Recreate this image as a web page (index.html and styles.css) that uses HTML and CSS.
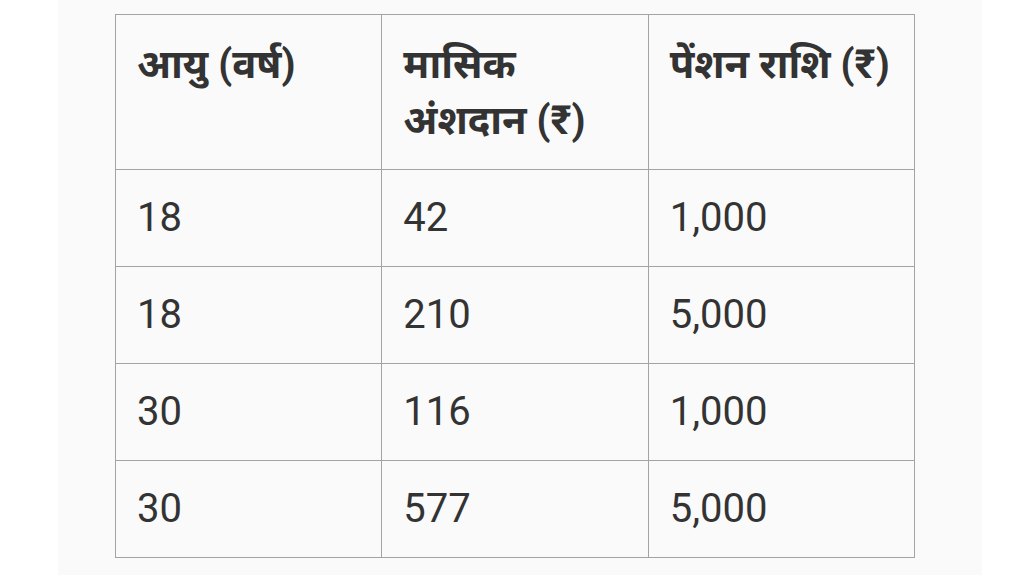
FILE: index.html
```html
<!DOCTYPE html>
<html lang="hi">
<head>
<meta charset="utf-8">
<link rel="stylesheet" href="styles.css">
</head>
<body>
<div class="panel">
  <table class="pension">
    <thead>
      <tr><th>आयु (वर्ष)</th><th>मासिक अंशदान (₹)</th><th>पेंशन राशि (₹)</th></tr>
    </thead>
    <tbody>
      <tr><td>18</td><td>42</td><td>1,000</td></tr>
      <tr><td>18</td><td>210</td><td>5,000</td></tr>
      <tr><td>30</td><td>116</td><td>1,000</td></tr>
      <tr><td>30</td><td>577</td><td>5,000</td></tr>
    </tbody>
  </table>
</div>
</body>
</html>
```
FILE: styles.css
```css
html, body {
  margin: 0;
  padding: 0;
  background: #ffffff;
}
.panel {
  margin-left: 58px;
  width: 924px;
  height: 575px;
  box-sizing: border-box;
  background: #fafafa;
  padding: 14px 0 0 57px;
}
.pension {
  width: 800px;
  border-collapse: collapse;
  table-layout: fixed;
  font-family: Roboto, "Noto Sans Devanagari", "Noto Sans", sans-serif;
  font-size: 40px;
  line-height: 56px;
  color: #333333;
}
.pension th, .pension td {
  border: 1.5px solid #a3a3a3;
  padding: 20px 21px;
  text-align: left;
  vertical-align: top;
}
.pension th {
  font-weight: 700;
  padding-top: 22px;
  padding-bottom: 20px;
}
.pension td {
  font-weight: 400;
}
```
